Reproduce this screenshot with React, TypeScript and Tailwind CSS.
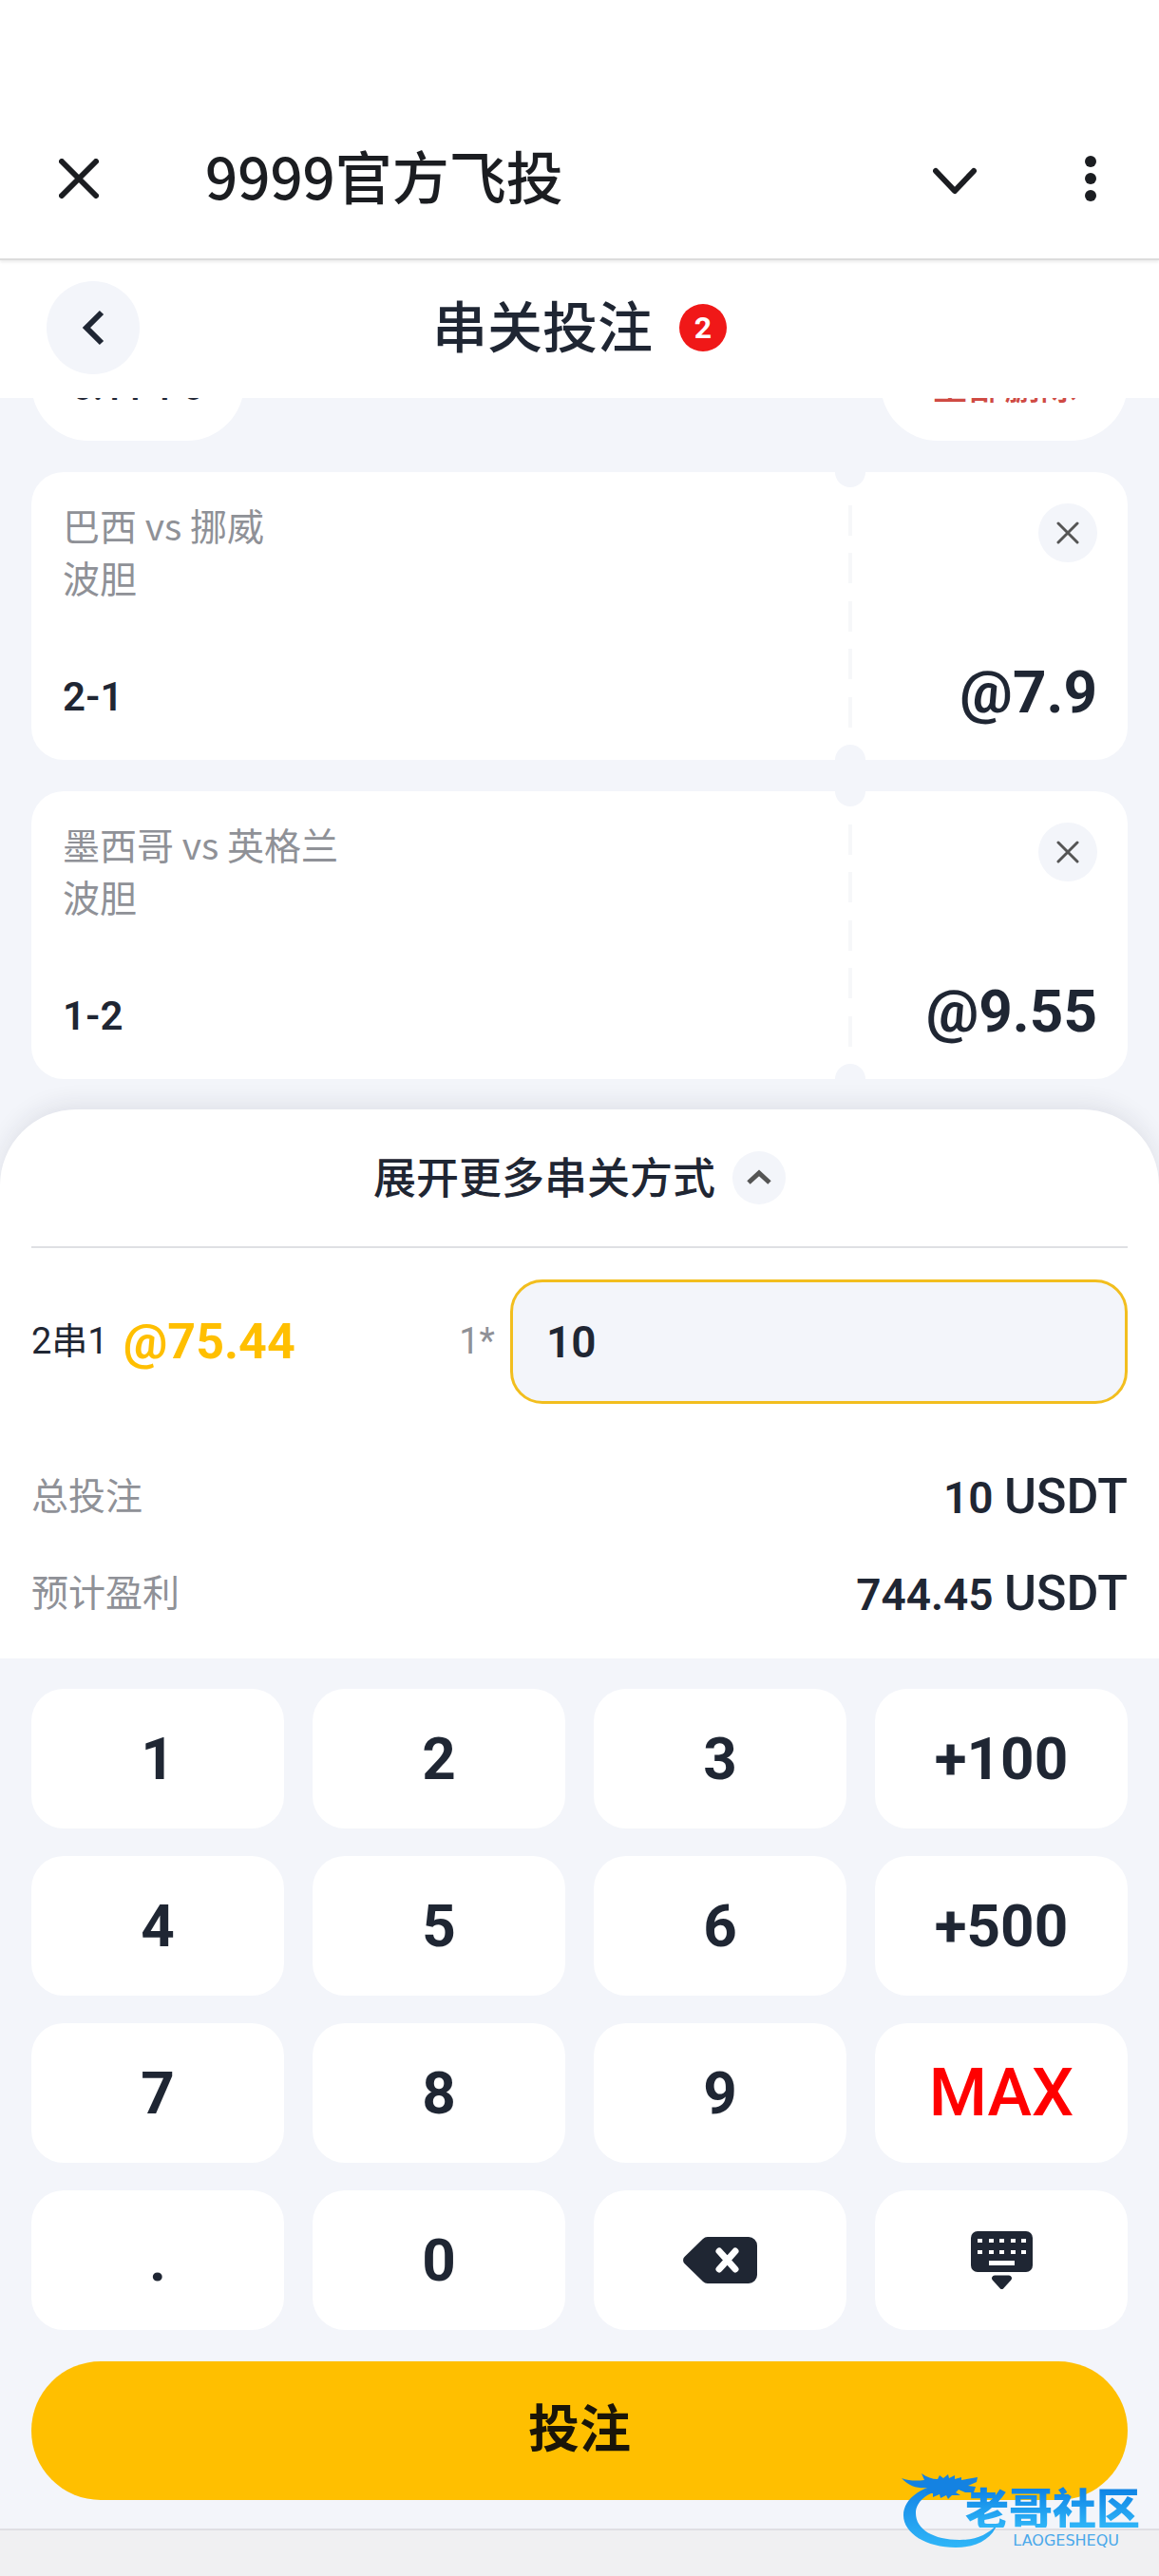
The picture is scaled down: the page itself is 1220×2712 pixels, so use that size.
import { useState } from 'react';

interface Bet {
  id: string;
  match: string;
  market: string;
  pick: string;
  odds: number;
}

const initialBets: Bet[] = [
  { id: 'bra-nor', match: '巴西 vs 挪威', market: '波胆', pick: '2-1', odds: 7.9 },
  { id: 'mex-eng', match: '墨西哥 vs 英格兰', market: '波胆', pick: '1-2', odds: 9.55 },
];

const keys = ['1', '2', '3', '+100', '4', '5', '6', '+500', '7', '8', '9', 'MAX', '.', '0', 'back', 'hide'];

const MAX_STAKE = 10000;

function BackspaceIcon() {
  return (
    <svg width="78" height="49" viewBox="0 0 78 49" fill="none" aria-hidden="true">
      <path
        d="M26 0H69a9 9 0 0 1 9 9V40a9 9 0 0 1-9 9H26a7 7 0 0 1-5-2L1.500 28a5 5 0 0 1 0-7L21 2a7 7 0 0 1 5-2Z"
        fill="#1f2633"
      />
      <path d="M38 15 55 34M55 15 38 34" stroke="#fff" strokeWidth="7" strokeLinecap="round" />
    </svg>
  );
}

function KeyboardIcon() {
  return (
    <svg width="65" height="61" viewBox="0 0 65 61" fill="none" aria-hidden="true">
      <rect width="65" height="43" rx="7" fill="#1f2633" />
      {[7, 19, 30, 42, 53].map(x => (
        <g key={x} fill="#fff">
          <rect x={x} y="8" width="5" height="4" />
          <rect x={x} y="20" width="5" height="4" />
        </g>
      ))}
      <rect x="19" y="31" width="27" height="5" fill="#fff" />
      <path d="M25 46.500h15a3 3 0 0 1 2.200 5L34.500 60a2.700 2.700 0 0 1-4 0L22.800 51.500a3 3 0 0 1 2.200-5Z" fill="#1f2633" />
    </svg>
  );
}

function BetCard({ bet, onRemove }: { bet: Bet; onRemove: () => void }) {
  return (
    <article className="flex h-[303px] overflow-hidden rounded-[34px] bg-white">
      <div className="flex flex-1 flex-col justify-between pt-7 pb-[31px] pl-[33px]">
        <div className="text-[39px] leading-[55px] text-[#8f9197]">
          <p>{bet.match}</p>
          <p>{bet.market}</p>
        </div>
        <p className="font-['Roboto',sans-serif] text-[42px] leading-[70px] font-semibold">{bet.pick}</p>
      </div>

      {/* perforated edge */}
      <div className="flex w-8 flex-col items-center justify-between">
        <span className="h-4 w-8 rounded-b-full bg-[#f3f5fa]" />
        {[0, 1, 2, 3, 4].map(i => (
          <span key={i} className="h-8 w-1 bg-[#f6f7f9]" />
        ))}
        <span className="h-4 w-8 rounded-t-full bg-[#f3f5fa]" />
      </div>

      <div className="flex w-[276px] flex-col items-end justify-between py-[33px] pr-8">
        <button
          type="button"
          aria-label="删除"
          onClick={onRemove}
          className="flex size-[62px] items-center justify-center rounded-full bg-[#f3f5fa]"
        >
          <svg width="24" height="24" viewBox="0 0 24 24" fill="none" stroke="#555" strokeWidth="3" strokeLinecap="round">
            <path d="M2 2 22 22M22 2 2 22" />
          </svg>
        </button>
        <p className="font-['Roboto',sans-serif] text-[62px] leading-[76px] font-bold">@{bet.odds}</p>
      </div>
    </article>
  );
}

export default function App() {
  const [bets, setBets] = useState<Bet[]>(initialBets);
  const [stake, setStake] = useState('10');

  const odds = bets.reduce((total, bet) => total * bet.odds, 1);
  const amount = Number(stake) || 0;
  const profit = Number((amount * odds - amount).toFixed(2));

  const handleKey = (key: string) => {
    if (key === 'back') {
      setStake(stake.slice(0, -1));
    } else if (key === 'MAX') {
      setStake(String(MAX_STAKE));
    } else if (key.startsWith('+')) {
      setStake(String(amount + Number(key)));
    } else if (key !== 'hide') {
      setStake(stake + key);
    }
  };

  return (
    <div className="relative flex min-h-screen flex-col bg-[#f3f5fa] font-['Noto_Sans_CJK_SC',sans-serif] text-[#1f2633]">
      <header className="relative z-10 border-b-2 border-[#dcdcdc] bg-white pt-[104px] shadow-[0_2px_3px_rgba(0,0,0,0.08)]">
        <div className="flex h-[168px] items-center pr-[66px] pl-[62px] text-[#1b1d21]">
          <button type="button" aria-label="关闭">
            <svg width="42" height="42" viewBox="0 0 42 42" fill="none" stroke="currentColor" strokeWidth="6" strokeLinecap="round">
              <path d="M3 3 39 39M39 3 3 39" />
            </svg>
          </button>
          <h1 className="ml-28 flex-1 pb-2 text-[60px] leading-[80px] font-medium">9999官方飞投</h1>
          <button type="button" aria-label="收起" className="mr-[114px]">
            <svg width="46" height="42" viewBox="0 0 46 42" fill="none" stroke="currentColor" strokeWidth="6" strokeLinecap="round" strokeLinejoin="round">
              <path d="M3 13 23 34 43 13" />
            </svg>
          </button>
          <button type="button" aria-label="更多">
            <svg width="12" height="48" viewBox="0 0 12 48" fill="currentColor">
              <circle cx="6" cy="6" r="6" />
              <circle cx="6" cy="24" r="6" />
              <circle cx="6" cy="42" r="6" />
            </svg>
          </button>
        </div>
      </header>

      <div className="grid h-[145px] grid-cols-[98px_1fr_98px] items-center bg-white px-[49px] pb-1">
        <button
          type="button"
          aria-label="返回"
          className="flex size-[98px] items-center justify-center rounded-full bg-[#f3f5fa]"
        >
          <svg width="24" height="38" viewBox="0 0 24 38" fill="none" stroke="currentColor" strokeWidth="6">
            <path d="M21 3 5 19 21 35" />
          </svg>
        </button>
        <div className="flex items-center justify-center gap-7">
          <h2 className="pb-2 text-[58px] leading-[80px] font-medium">串关投注</h2>
          <span className="flex size-[50px] items-center justify-center rounded-full bg-[#f01818] font-['Roboto',sans-serif] text-[32px] leading-none font-bold text-white">
            {bets.length}
          </span>
        </div>
      </div>

      {/* list is scrolled, so the first row sits half under the bar */}
      <main className="overflow-hidden px-[33px] pb-8">
        <div className="-mt-[76px] flex flex-col gap-[33px]">
          <div className="flex h-[121px] justify-between">
            <div className="flex items-end rounded-full bg-white px-[43px] pb-9 font-['Roboto',sans-serif] text-[38px] leading-[40px] font-semibold whitespace-pre">
              0.11 1 0
            </div>
            <button
              type="button"
              onClick={() => setBets([])}
              className="rounded-full bg-white px-[54px] text-[38px] font-medium text-[#cf4a43]"
            >
              全部删除
            </button>
          </div>
          {bets.map(bet => (
            <BetCard key={bet.id} bet={bet} onRemove={() => setBets(bets.filter(b => b.id !== bet.id))} />
          ))}
        </div>
      </main>

      <section className="rounded-t-[80px] bg-white px-[33px] pb-[19px] shadow-[0_-6px_24px_rgba(31,38,51,0.09)]">
        <button
          type="button"
          className="flex h-[146px] w-full items-center justify-center gap-[18px] border-b-2 border-[#dfe0e3] text-[45px] font-medium"
        >
          <span className="pb-1">展开更多串关方式</span>
          <span className="flex size-14 items-center justify-center rounded-full bg-[#f3f5fa]">
            <svg width="26" height="18" viewBox="0 0 26 18" fill="none" stroke="#555" strokeWidth="5">
              <path d="M2 14 13 4 24 14" />
            </svg>
          </span>
        </button>

        <div className="mt-[33px] flex items-center">
          <span className="font-['Roboto','Noto_Sans_CJK_SC',sans-serif] text-[38px]">2串1</span>
          <span className="ml-4 flex-1 font-['Roboto',sans-serif] text-[52px] leading-[64px] font-bold text-[#ffbf00]">
            @{Math.floor(odds * 100) / 100}
          </span>
          <label htmlFor="stake" className="mr-4 font-['Roboto',sans-serif] text-[38px] text-[#8f9197]">
            1*
          </label>
          <input
            id="stake"
            inputMode="none"
            value={stake}
            onChange={e => setStake(e.target.value)}
            className="h-[131px] w-[650px] rounded-[34px] border-3 border-[#f2be1e] bg-[#f3f5fa] px-[35px] font-['Roboto',sans-serif] text-[46px] font-semibold outline-none"
          />
        </div>

        <dl className="mt-[45px] text-[39px] text-[#8f9197]">
          <div className="flex h-[102px] items-center justify-between">
            <dt className="pb-1">总投注</dt>
            <dd className="pt-1 font-['Roboto',sans-serif] text-[46px] font-semibold text-[#1f2633]">
              {amount} <span className="text-[52px] font-medium">USDT</span>
            </dd>
          </div>
          <div className="flex h-[102px] items-center justify-between">
            <dt className="pb-1">预计盈利</dt>
            <dd className="pt-1 font-['Roboto',sans-serif] text-[46px] font-semibold text-[#1f2633]">
              {profit} <span className="text-[52px] font-medium">USDT</span>
            </dd>
          </div>
        </dl>
      </section>

      <div className="relative bg-[#f3f5fa] px-[33px] pt-8 pb-[30px]">
        <div className="grid grid-cols-4 gap-x-[30px] gap-y-[29px]">
          {keys.map(key => (
            <button
              key={key}
              type="button"
              aria-label={key === 'back' ? '退格' : key === 'hide' ? '收起键盘' : undefined}
              onClick={() => handleKey(key)}
              className={`flex h-[147px] items-center justify-center rounded-[34px] bg-white font-['Roboto',sans-serif] ${
                key === 'MAX' ? 'text-[70px] font-medium text-[#ff0000]' : 'text-[62px] font-bold'
              }`}
            >
              {key === 'back' ? <BackspaceIcon /> : key === 'hide' ? <KeyboardIcon /> : key}
            </button>
          ))}
        </div>
        <button
          type="button"
          className="mt-[33px] h-[146px] w-full rounded-full bg-[#ffbf00] pb-3 text-[54px] font-bold text-[#1a1508]"
        >
          投注
        </button>
      </div>

      <footer className="flex-1 border-t-2 border-[#dfdfe3] bg-[#f0f0f2]" />

      {/* site mark floats over the bottom corner */}
      <div className="absolute right-5 bottom-[28px] h-[84px] w-[252px]">
        <svg className="absolute inset-0" width="252" height="84" viewBox="0 0 252 84" fill="none" aria-hidden="true">
          <defs>
            <linearGradient id="mark" x1="0" y1="0" x2="0" y2="1">
              <stop offset="0" stopColor="#1080e4" />
              <stop offset="1" stopColor="#30b6f8" />
            </linearGradient>
          </defs>
          <path
            d="M56 13C24 15 3 30 3 48c0 19 24 34 55 34 22 0 38-9 44-25-10 12-24 17-40 17-27 0-46-11-46-28 0-12 11-22 32-26Z"
            fill="url(#mark)"
          />
          <path
            d="M1 9c8 3 16 3 24 2l-3-7c6 4 11 6 17 6l2-4 4 3 5-4 1 4 6-3 0 4 7-2 0 3 17-3-1 5-9 4 8 1-2 6-9 0-7-3-3 3 5 3-9 0-4 4-2-4-6 3-1-4-7 3 0-4-8 0 4-6c-10 1-20 0-29-10Z"
            fill="#1482e2"
          />
        </svg>
        <span className="absolute top-[15px] right-0 bg-linear-to-b from-[#0b7ce2] to-[#30b6f8] bg-clip-text text-[46px] leading-[46px] font-black text-transparent">
          老哥社区
        </span>
        <span className="absolute right-[22px] bottom-0 font-['DejaVu_Sans',sans-serif] text-[16px] leading-[18px] text-[#4aa8ea]">
          LAOGESHEQU
        </span>
      </div>
    </div>
  );
}
